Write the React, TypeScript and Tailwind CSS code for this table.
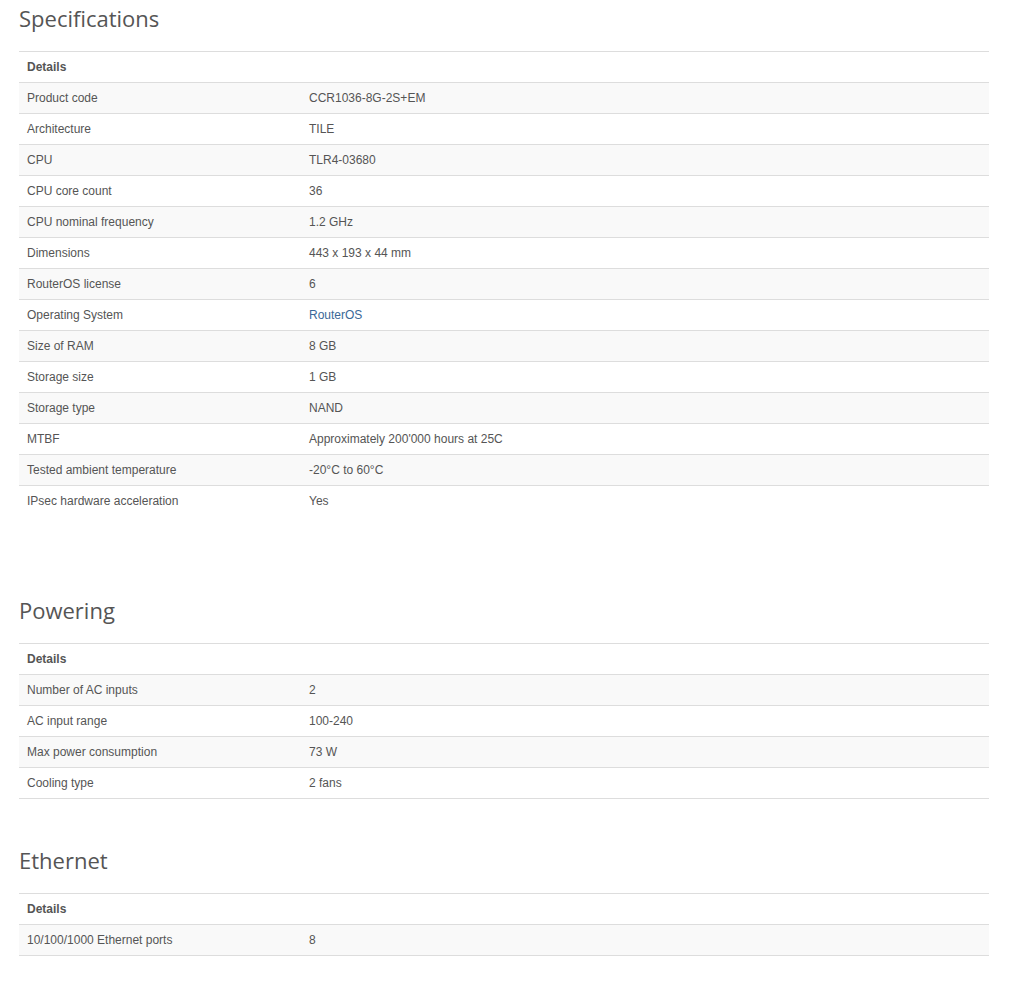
type Row = { label: string; value: string; link?: boolean };

const specifications: Row[] = [
  { label: "Product code", value: "CCR1036-8G-2S+EM" },
  { label: "Architecture", value: "TILE" },
  { label: "CPU", value: "TLR4-03680" },
  { label: "CPU core count", value: "36" },
  { label: "CPU nominal frequency", value: "1.2 GHz" },
  { label: "Dimensions", value: "443 x 193 x 44 mm" },
  { label: "RouterOS license", value: "6" },
  { label: "Operating System", value: "RouterOS", link: true },
  { label: "Size of RAM", value: "8 GB" },
  { label: "Storage size", value: "1 GB" },
  { label: "Storage type", value: "NAND" },
  { label: "MTBF", value: "Approximately 200'000 hours at 25C" },
  { label: "Tested ambient temperature", value: "-20°C to 60°C" },
  { label: "IPsec hardware acceleration", value: "Yes" },
];

const powering: Row[] = [
  { label: "Number of AC inputs", value: "2" },
  { label: "AC input range", value: "100-240" },
  { label: "Max power consumption", value: "73 W" },
  { label: "Cooling type", value: "2 fans" },
];

const ethernet: Row[] = [{ label: "10/100/1000 Ethernet ports", value: "8" }];

function SpecTable({ rows, closed }: { rows: Row[]; closed?: boolean }) {
  return (
    <div className={closed ? "border-b border-[#ddd]" : ""}>
      <div className="flex h-[31px] items-center border-t border-[#ddd] px-2 font-bold">
        Details
      </div>
      {rows.map((row, i) => (
        <div
          key={row.label}
          className={
            "flex h-[31px] items-center border-t border-[#ddd] " +
            (i % 2 === 0 ? "bg-[#f9f9f9]" : "bg-white")
          }
        >
          <div className="w-[282px] shrink-0 px-2">{row.label}</div>
          <div className="flex-1 px-2">
            {row.link ? (
              <a href="#" className="text-[#3a6897]">
                {row.value}
              </a>
            ) : (
              row.value
            )}
          </div>
        </div>
      ))}
    </div>
  );
}

function Heading({ children }: { children: string }) {
  return (
    <h2 className="mb-[21px] font-['Open_Sans',sans-serif] text-[22px] leading-[24px] font-normal text-[#555]">
      {children}
    </h2>
  );
}

export default function App() {
  return (
    <div className="min-h-screen bg-white">
      <div className="ml-[19px] w-[970px] pt-[6px] font-['Liberation_Sans',Arial,sans-serif] text-[12px] text-[#555]">
        <Heading>Specifications</Heading>
        <SpecTable rows={specifications} />

        <div className="mt-[82px]">
          <Heading>Powering</Heading>
          <SpecTable rows={powering} closed />
        </div>

        <div className="mt-[49px]">
          <Heading>Ethernet</Heading>
          <SpecTable rows={ethernet} closed />
        </div>
      </div>
    </div>
  );
}
